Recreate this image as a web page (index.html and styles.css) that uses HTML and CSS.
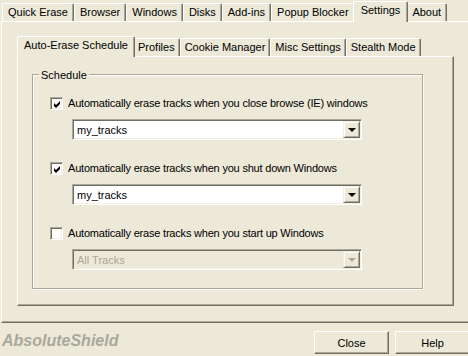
FILE: index.html
```html
<!doctype html>
<html>
  <head>
    <meta charset="UTF-8" />
    <title>AbsoluteShield Settings</title>
    <link rel="stylesheet" href="styles.css">
  </head>

  <body>
    <div class="tabs">
      <span class="tab">Quick Erase</span>
      <span class="tab">Browser</span>
      <span class="tab">Windows</span>
      <span class="tab">Disks</span>
      <span class="tab">Add-ins</span>
      <span class="tab">Popup Blocker</span>
      <span class="tab active">Settings</span>
      <span class="tab">About</span>
    </div>

    <div class="outer-pane">
      <div class="tabs sub-tabs">
        <span class="tab active">Auto-Erase Schedule</span>
        <span class="tab">Profiles</span>
        <span class="tab">Cookie Manager</span>
        <span class="tab">Misc Settings</span>
        <span class="tab">Stealth Mode</span>
      </div>

      <div class="inner-pane">
        <div class="group">
          <span class="group-title">Schedule</span>

          <div class="option">
            <label class="check">
              <span class="box">
                <svg width="9" height="9" viewBox="0 0 9 9"><polygon points="1,3 3,5 7,1 7,4 3,8 1,6" /></svg>
              </span>
              Automatically erase tracks when you close browse (IE) windows
            </label>
            <div class="combo">
              <span class="value">my_tracks</span>
              <span class="arrow"></span>
            </div>
          </div>

          <div class="option">
            <label class="check">
              <span class="box">
                <svg width="9" height="9" viewBox="0 0 9 9"><polygon points="1,3 3,5 7,1 7,4 3,8 1,6" /></svg>
              </span>
              Automatically erase tracks when you shut down Windows
            </label>
            <div class="combo">
              <span class="value">my_tracks</span>
              <span class="arrow"></span>
            </div>
          </div>

          <div class="option">
            <label class="check">
              <span class="box"></span>
              Automatically erase tracks when you start up Windows
            </label>
            <div class="combo disabled">
              <span class="value">All Tracks</span>
              <span class="arrow"></span>
            </div>
          </div>
        </div>
      </div>
    </div>

    <div class="footer">
      <span class="brand">AbsoluteShield</span>
      <div class="buttons">
        <button class="button">Close</button>
        <button class="button">Help</button>
      </div>
    </div>
  </body>
</html>
```

FILE: styles.css
```css
*,
*::before,
*::after {
  margin: 0;
  padding: 0;
  box-sizing: border-box;
}

html {
  overflow: hidden;
}

body {
  background-color: #ece9d8;
  color: #000;
  font-family: "Liberation Sans", Arial, sans-serif;
  font-size: 11px;
  width: 470px;
  height: 356px;
}

/* tab strips */

.tabs {
  display: flex;
  align-items: flex-end;
  height: 21px;
  padding-left: 2px;
  position: relative;
  z-index: 1;
}

.tab {
  height: 18px;
  padding: 2px 5px 0;
  line-height: 13px;
  white-space: nowrap;
  background-color: #ece9d8;
  border-top: 1px solid #fff;
  border-left: 1px solid #fff;
  border-right: 1px solid #716f64;
  border-radius: 2px 2px 0 0;
  box-shadow: inset -1px 0 #aca899;
}

.tab.active {
  height: 21px;
  margin: 0 -2px -1px;
  padding: 2px 7px 0;
  position: relative;
  z-index: 2;
}

.sub-tabs .tab {
  padding: 2px 4px 0;
}

.sub-tabs .tab.active {
  padding: 2px 6px 0;
}

/* panes */

.outer-pane {
  margin-left: 1px;
  width: 469px;
  padding: 13px 0 16px 15px;
  border-top: 1px solid #fff;
  border-left: 1px solid #fff;
  border-bottom: 1px solid #716f64;
  box-shadow: inset 0 -1px #aca899;
}

.inner-pane {
  width: 437px;
  height: 250px;
  padding: 17px 0 0 14px;
  border: 1px solid;
  border-color: #fff #716f64 #716f64 #fff;
  box-shadow: inset -1px -1px #aca899;
}

.group {
  position: relative;
  width: 391px;
  height: 215px;
  padding: 22px 0 0 17px;
  border: 1px solid #aca899;
  box-shadow: inset 1px 1px #fff, 1px 1px #fff;
}

.group-title {
  position: absolute;
  top: -6px;
  left: 6px;
  padding: 0 2px;
  line-height: 13px;
  background-color: #ece9d8;
}

.option {
  margin-bottom: 22px;
}

.check {
  display: flex;
  align-items: center;
  gap: 5px;
  height: 13px;
  line-height: 13px;
  letter-spacing: -0.2px;
}

.box {
  width: 13px;
  height: 13px;
  display: flex;
  align-items: center;
  justify-content: center;
  background-color: #fff;
  border: 1px solid;
  border-color: #aca899 #fff #fff #aca899;
  box-shadow: inset 1px 1px #716f64, inset -1px -1px #f1efe2;
}

.box svg {
  fill: #000;
  margin: 1px 0 0 1px;
}

/* drop-down lists */

.combo {
  display: flex;
  align-items: center;
  width: 290px;
  height: 21px;
  margin: 9px 0 0 22px;
  padding: 1px;
  background-color: #fff;
  border: 1px solid;
  border-color: #aca899 #fff #fff #aca899;
  box-shadow: inset 1px 1px #716f64, inset -1px -1px #f1efe2;
}

.value {
  flex: 1;
  padding-left: 3px;
}

.arrow {
  width: 17px;
  height: 17px;
  display: flex;
  align-items: center;
  justify-content: center;
  background-color: #ece9d8;
  border: 1px solid;
  border-color: #f1efe2 #716f64 #716f64 #f1efe2;
  box-shadow: inset 1px 1px #fff, inset -1px -1px #aca899;
}

.arrow::after {
  content: "";
  border-top: 4px solid #000;
  border-left: 4px solid transparent;
  border-right: 4px solid transparent;
  margin-top: 1px;
}

.combo.disabled {
  background-color: #ece9d8;
  color: #aca899;
}

.combo.disabled .arrow::after {
  border-top-color: #aca899;
}

/* bottom bar */

.footer {
  display: flex;
  padding: 8px 0 0 2px;
}

.brand {
  font-size: 16px;
  font-weight: bold;
  font-style: italic;
  line-height: 19px;
  color: #a9a89c;
}

.buttons {
  display: flex;
  gap: 6px;
  margin-left: auto;
}

.button {
  width: 75px;
  height: 23px;
  font-family: "Liberation Sans", Arial, sans-serif;
  font-size: 11px;
  color: #000;
  background-color: #ece9d8;
  border: 1px solid;
  border-color: #fff #716f64 #716f64 #fff;
  box-shadow: inset -1px -1px #aca899;
}
```
